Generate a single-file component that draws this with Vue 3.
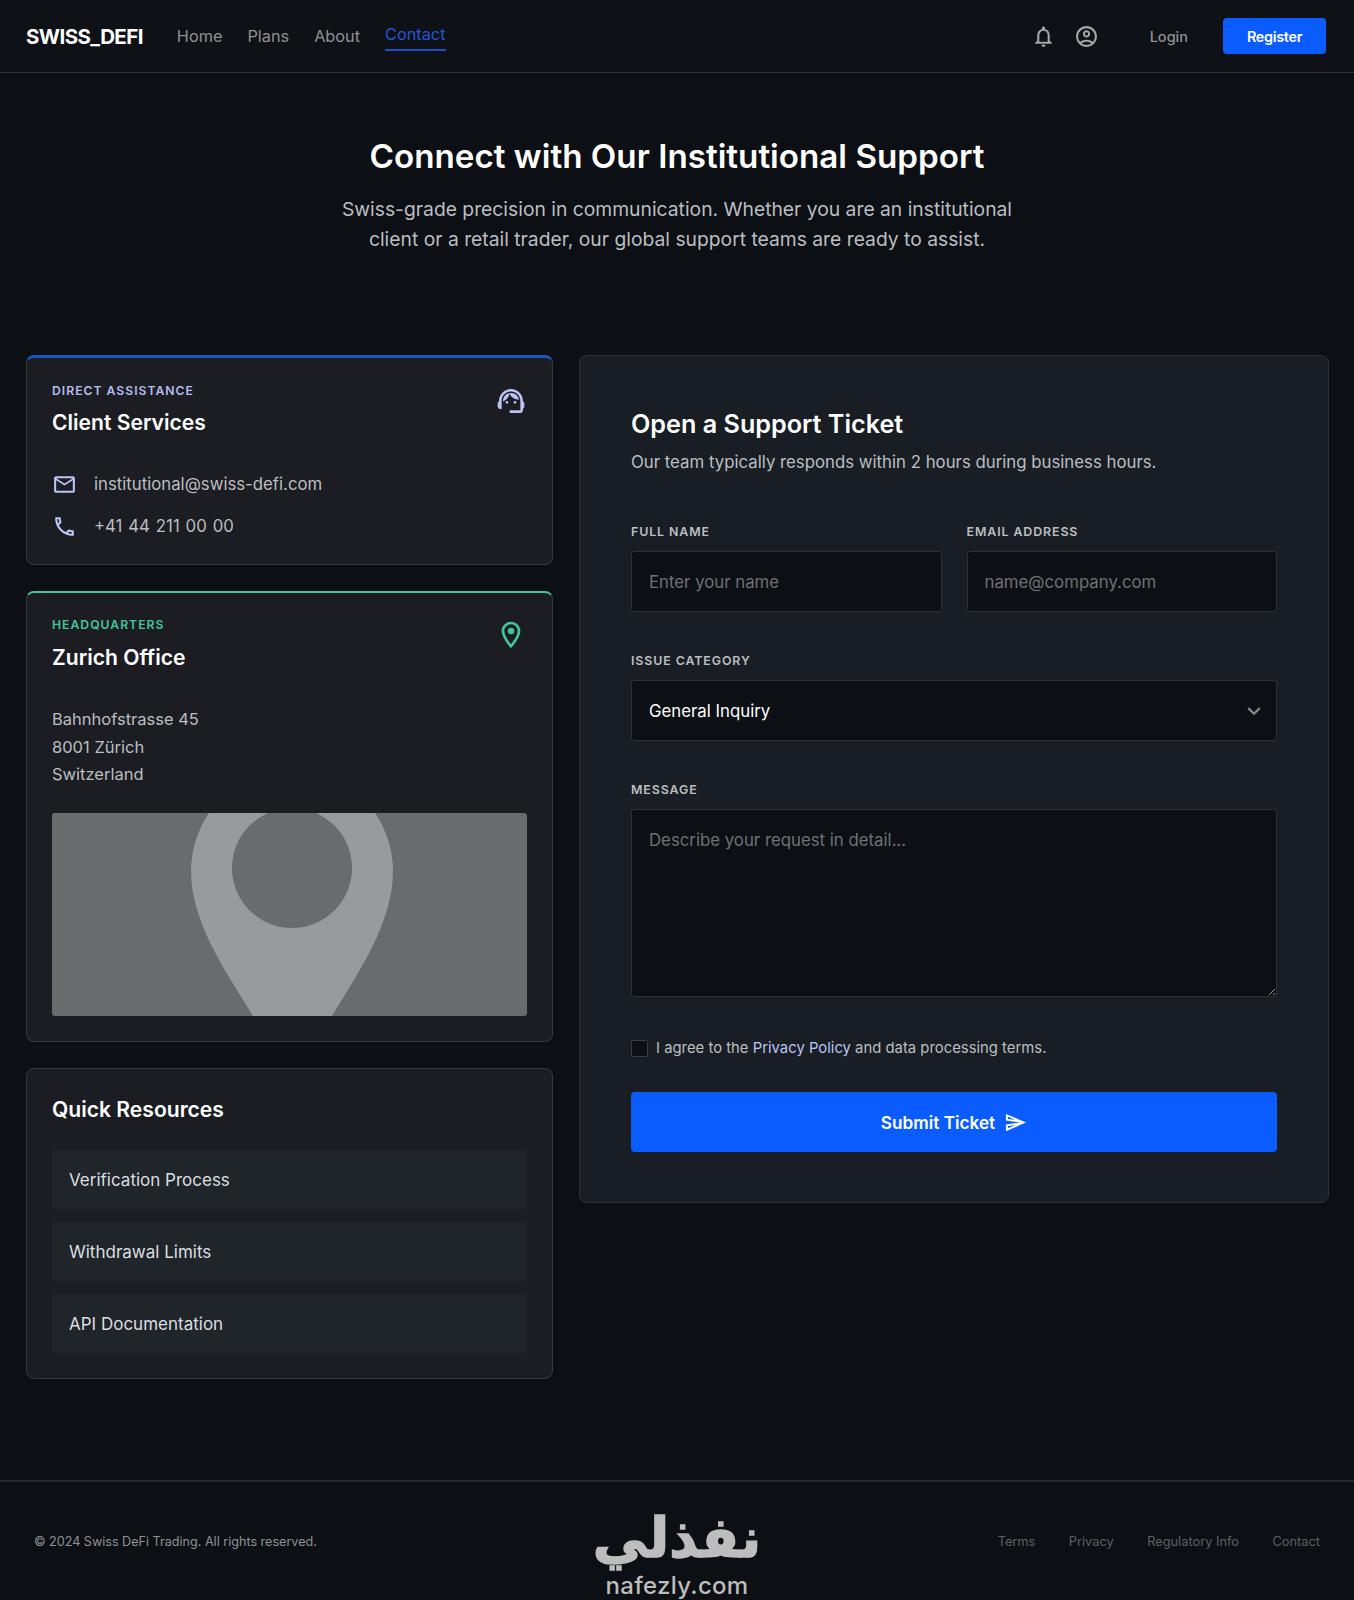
<template>
  <div class="page">
    <header class="topbar">
      <div class="brand">SWISS_DEFI</div>
      <nav class="nav">
        <a v-for="item in navItems" :key="item" class="nav-link" :class="{ active: item === 'Contact' }">{{ item }}</a>
      </nav>
      <div class="top-actions">
        <svg class="top-icon" viewBox="0 0 24 24"><path d="M12 22c1.1 0 2-.9 2-2h-4c0 1.1.9 2 2 2zm6-6v-5c0-3.07-1.63-5.64-4.5-6.32V4c0-.83-.67-1.5-1.5-1.5s-1.5.67-1.5 1.5v.68C7.64 5.36 6 7.92 6 11v5l-2 2v1h16v-1l-2-2zm-2 1H8v-6c0-2.48 1.51-4.5 4-4.5s4 2.02 4 4.5v6z" /></svg>
        <svg class="top-icon" viewBox="0 0 24 24"><path d="M12 2C6.48 2 2 6.48 2 12s4.48 10 10 10 10-4.48 10-10S17.52 2 12 2zM7.35 18.5C8.66 17.56 10.26 17 12 17s3.34.56 4.65 1.5C15.34 19.44 13.74 20 12 20s-3.34-.56-4.65-1.5zm10.79-1.38C16.45 15.8 14.32 15 12 15s-4.45.8-6.14 2.12C4.7 15.73 4 13.95 4 12c0-4.42 3.58-8 8-8s8 3.58 8 8c0 1.95-.7 3.73-1.86 5.12z" /><path d="M12 6c-1.93 0-3.5 1.57-3.5 3.5S10.07 13 12 13s3.5-1.57 3.5-3.5S13.93 6 12 6zm0 5c-.83 0-1.5-.67-1.5-1.5S11.17 8 12 8s1.5.67 1.5 1.5S12.83 11 12 11z" /></svg>
        <a class="login">Login</a>
        <button class="register">Register</button>
      </div>
    </header>

    <section class="hero">
      <h1>Connect with Our Institutional Support</h1>
      <p>Swiss-grade precision in communication. Whether you are an institutional<br>client or a retail trader, our global support teams are ready to assist.</p>
    </section>

    <main class="content">
      <div class="left-col">
        <section class="card card-blue">
          <div class="card-head">
            <div>
              <div class="eyebrow eyebrow-blue">DIRECT ASSISTANCE</div>
              <h3>Client Services</h3>
            </div>
            <svg class="head-icon lilac" viewBox="0 0 24 24"><path d="M21 12.22C21 6.73 16.74 3 12 3c-4.69 0-9 3.65-9 9.28-.6.34-1 .98-1 1.72v2c0 1.1.9 2 2 2h1v-6.1c0-3.87 3.13-7 7-7s7 3.13 7 7V19h-8v2h8c1.1 0 2-.9 2-2v-1.22c.59-.31 1-.92 1-1.64v-2.3c0-.7-.41-1.31-1-1.62z" /><circle cx="9" cy="13" r="1" /><circle cx="15" cy="13" r="1" /><path d="M18 11.03C17.52 8.18 15.04 6 12.05 6c-3.03 0-6.29 2.51-6.03 6.45 2.47-1.01 4.33-3.21 4.86-5.89 1.31 2.63 4 4.44 7.12 4.47z" /></svg>
          </div>
          <div class="contact-rows">
            <div class="contact-row">
              <svg class="row-icon lilac" viewBox="0 0 24 24"><path d="M20 4H4c-1.1 0-1.99.9-1.99 2L2 18c0 1.1.9 2 2 2h16c1.1 0 2-.9 2-2V6c0-1.1-.9-2-2-2zm0 14H4V8l8 5 8-5v10zm-8-7L4 6h16l-8 5z" /></svg>
              <span>institutional@swiss-defi.com</span>
            </div>
            <div class="contact-row">
              <svg class="row-icon lilac" viewBox="0 0 24 24"><path d="M6.54 5c.06.89.21 1.76.45 2.59l-1.2 1.2c-.41-1.2-.67-2.47-.76-3.79h1.51m9.86 12.02c.85.24 1.72.39 2.6.45v1.49c-1.32-.09-2.59-.35-3.8-.75l1.2-1.19M7.5 3H4c-.55 0-1 .45-1 1 0 9.39 7.61 17 17 17 .55 0 1-.45 1-1v-3.49c0-.55-.45-1-1-1-1.24 0-2.45-.2-3.57-.57-.1-.04-.21-.05-.31-.05-.26 0-.51.1-.71.29l-2.2 2.2c-2.83-1.45-5.15-3.76-6.59-6.59l2.2-2.2c.28-.28.36-.67.25-1.02C8.7 6.45 8.5 5.25 8.5 4c0-.55-.45-1-1-1z" /></svg>
              <span class="phone">+41 44 211 00 00</span>
            </div>
          </div>
        </section>

        <section class="card card-green">
          <div class="card-head">
            <div>
              <div class="eyebrow eyebrow-green">HEADQUARTERS</div>
              <h3>Zurich Office</h3>
            </div>
            <svg class="head-icon green" viewBox="0 0 24 24"><path d="M12 2C8.13 2 5 5.13 5 9c0 5.25 7 13 7 13s7-7.75 7-13c0-3.87-3.13-7-7-7zM7 9c0-2.76 2.24-5 5-5s5 2.24 5 5c0 2.88-2.88 7.19-5 9.88C9.92 16.21 7 11.85 7 9z" /><circle cx="12" cy="9" r="2.5" /></svg>
          </div>
          <address class="address">Bahnhofstrasse 45<br>8001 Zürich<br>Switzerland</address>
          <svg class="map" viewBox="0 0 475 203" preserveAspectRatio="none">
            <path d="M157 0C145 18 139 38 139 58C139 110 175 160 201 203L280 203C306 160 341 110 341 58C341 38 335 18 323 0Z" fill="#989a9b" />
            <circle cx="240" cy="55" r="60" fill="#696b6c" />
          </svg>
        </section>

        <section class="card card-plain">
          <h3 class="resources-title">Quick Resources</h3>
          <div class="resources">
            <a v-for="link in resources" :key="link" class="resource">{{ link }}</a>
          </div>
        </section>
      </div>

      <form class="ticket" @submit.prevent>
        <h2>Open a Support Ticket</h2>
        <p class="ticket-sub">Our team typically responds within 2 hours during business hours.</p>
        <div class="field-pair">
          <label class="field">
            <span class="field-label">FULL NAME</span>
            <input class="control" type="text" placeholder="Enter your name">
          </label>
          <label class="field">
            <span class="field-label">EMAIL ADDRESS</span>
            <input class="control" type="text" placeholder="name@company.com">
          </label>
        </div>
        <div class="field">
          <span class="field-label">ISSUE CATEGORY</span>
          <div class="control select">
            <span>General Inquiry</span>
            <svg class="chevron" viewBox="0 0 24 24"><path d="M16.59 8.59L12 13.17 7.41 8.59 6 10l6 6 6-6z" /></svg>
          </div>
        </div>
        <label class="field">
          <span class="field-label">MESSAGE</span>
          <textarea class="control message" placeholder="Describe your request in detail..."></textarea>
        </label>
        <label class="agree">
          <input type="checkbox" class="check">
          <span>I agree to the <a class="policy">Privacy Policy</a> and data processing terms.</span>
        </label>
        <button class="submit" type="submit">
          Submit Ticket
          <svg class="send" viewBox="0 0 24 24"><path d="M4.01 6.03l7.51 3.22-7.52-1 .01-2.22m7.5 8.72L4 17.97v-2.22l7.51-1M2.01 3L2 10l15 2-15 2 .01 7L23 12 2.01 3z" /></svg>
        </button>
      </form>
    </main>

    <footer class="footer">
      <div class="copyright">© 2024 Swiss DeFi Trading. All rights reserved.</div>
      <div class="footer-links">
        <a v-for="link in footerLinks" :key="link">{{ link }}</a>
      </div>
      <div class="watermark">
        <div class="wm-ar">نفذلي</div>
        <div class="wm-en">nafezly.com</div>
      </div>
    </footer>
  </div>
</template>

<script setup>
const navItems = ['Home', 'Plans', 'About', 'Contact']
const resources = ['Verification Process', 'Withdrawal Limits', 'API Documentation']
const footerLinks = ['Terms', 'Privacy', 'Regulatory Info', 'Contact']
</script>

<style>
body {
  background: #0c0f14;
}
</style>

<style scoped>
.page {
  position: relative;
  width: 1354px;
  height: 1600px;
  overflow: hidden;
  background: #0c0f14;
  color: #fff;
  font-family: Inter, "Noto Sans", sans-serif;
}
.topbar {
  display: flex;
  align-items: center;
  height: 72px;
  padding: 0 28px 0 26px;
  border-bottom: 1px solid #303236;
  background: #0e1116;
}
.brand {
  font-size: 20.5px;
  font-weight: 700;
  letter-spacing: -0.6px;
  margin-right: 34px;
}
.nav {
  display: flex;
  gap: 25px;
  align-items: center;
}
.nav-link {
  font-size: 16.3px;
  line-height: 20px;
  color: #8f9296;
}
.nav-link.active {
  color: #2158d6;
  padding-bottom: 5px;
  border-bottom: 2px solid #1a50d0;
  margin-top: 3px;
}
.top-actions {
  display: flex;
  align-items: center;
  margin-left: auto;
}
.top-icon {
  width: 25px;
  height: 25px;
  fill: #a4a6a9;
  margin-right: 18px;
}
.login {
  margin: 0 35px 0 33px;
  font-size: 14.5px;
  font-weight: 500;
  color: #909296;
}
.register {
  width: 103px;
  height: 36px;
  border: 0;
  border-radius: 4px;
  background: #0a5cff;
  color: #fff;
  font-family: inherit;
  font-size: 14.4px;
  font-weight: 600;
  letter-spacing: -0.3px;
}
.hero {
  text-align: center;
  padding-top: 59px;
  height: 282px;
  box-sizing: border-box;
}
.hero h1 {
  margin: 0;
  font-size: 33.2px;
  line-height: 48px;
  font-weight: 600;
}
.hero p {
  margin: 14px 0 0;
  font-size: 19.3px;
  line-height: 30px;
  color: #bcbec1;
}
.content {
  display: grid;
  grid-template-columns: 527px 750px;
  gap: 26px;
  align-items: start;
  padding: 0 26px;
}
.left-col {
  display: flex;
  flex-direction: column;
  gap: 26px;
}
.card {
  box-sizing: border-box;
  border: 1px solid #36393d;
  border-radius: 8px;
  background: #1b1d22;
  padding: 24px 25px 25px;
}
.card-blue {
  border-top: 3px solid #1d55c4;
  padding-top: 25px;
  height: 210px;
}
.card-green {
  border-top: 2px solid #41c69b;
  height: 451px;
}
.card-green h3 {
  margin-top: 9px;
}
.card-plain {
  height: 311px;
}
.card-head {
  display: flex;
  justify-content: space-between;
  align-items: flex-start;
}
.eyebrow {
  font-size: 12.2px;
  line-height: 16px;
  font-weight: 600;
  letter-spacing: 1px;
}
.eyebrow-blue {
  color: #b5bcf0;
}
.eyebrow-green {
  color: #41c69b;
}
h3 {
  margin: 8px 0 0;
  font-size: 21.1px;
  line-height: 32px;
  font-weight: 600;
}
.head-icon {
  width: 32px;
  height: 32px;
  margin-top: 2px;
}
.lilac {
  fill: #bcc3f5;
}
.green {
  fill: #41c69b;
}
.contact-rows {
  display: flex;
  flex-direction: column;
  gap: 14px;
  margin-top: 31px;
}
.contact-row {
  display: flex;
  align-items: center;
  gap: 17px;
  height: 28px;
  font-size: 16.75px;
  color: #bcbec1;
}
.phone {
  word-spacing: 1.2px;
}
.row-icon {
  width: 25px;
  height: 25px;
}
.address {
  margin-top: 32px;
  font-style: normal;
  font-size: 16.5px;
  line-height: 27.5px;
  color: #bcbec1;
}
.map {
  display: block;
  width: 475px;
  height: 203px;
  margin-top: 24px;
  border-radius: 3px;
  background: #696b6c;
}
.resources-title {
  margin: 1px 0 0;
}
.resources {
  display: flex;
  flex-direction: column;
  gap: 13px;
  margin-top: 24px;
}
.resource {
  display: flex;
  align-items: center;
  height: 59px;
  padding: 0 17px;
  border-radius: 3px;
  background: #20252a;
  font-size: 17px;
  color: #dcdee0;
}
.ticket {
  box-sizing: border-box;
  height: 848px;
  padding: 49px 51px 0;
  border: 1px solid #2e3237;
  border-radius: 8px;
  background: #181e24;
}
.ticket h2 {
  margin: 0;
  font-size: 25.2px;
  line-height: 38px;
  font-weight: 600;
}
.ticket-sub {
  margin: 5px 0 0;
  font-size: 16.8px;
  line-height: 28px;
  color: #bcbec1;
}
.field-pair {
  display: grid;
  grid-template-columns: 1fr 1fr;
  gap: 25px;
  margin-top: 48px;
}
.field {
  display: flex;
  flex-direction: column;
}
.field-label {
  font-size: 12.4px;
  line-height: 16px;
  font-weight: 600;
  letter-spacing: 0.9px;
  color: #bcbec1;
  margin-bottom: 11px;
}
.control {
  box-sizing: border-box;
  width: 100%;
  height: 61px;
  padding: 0 17px;
  border: 1px solid #2e3237;
  border-radius: 3px;
  background: #0c0f14;
  color: #fff;
  font-family: inherit;
  font-size: 16.8px;
}
.control::placeholder {
  color: #6e7175;
}
.ticket > .field {
  margin-top: 41px;
}
.select {
  display: flex;
  align-items: center;
  justify-content: space-between;
  padding-right: 9px;
}
.chevron {
  width: 26px;
  height: 26px;
  fill: #8a8d91;
}
.message {
  display: block;
  height: 188px;
  padding-top: 18px;
  line-height: 24px;
}
.agree {
  display: flex;
  align-items: center;
  gap: 8px;
  margin-top: 42px;
  font-size: 14.85px;
  color: #bcbec1;
}
.check {
  appearance: none;
  box-sizing: border-box;
  width: 17px;
  height: 17px;
  margin: 0;
  border: 1px solid #3a3d42;
  border-radius: 2px;
  background: #0c0f14;
}
.policy {
  color: #bcc3f5;
}
.submit {
  display: flex;
  align-items: center;
  justify-content: center;
  gap: 9px;
  width: 100%;
  height: 60px;
  margin-top: 35px;
  border: 0;
  border-radius: 4px;
  background: #0a5cff;
  color: #fff;
  font-family: inherit;
  font-size: 17.2px;
  font-weight: 600;
}
.send {
  width: 23px;
  height: 23px;
  fill: #fff;
}
.footer {
  position: absolute;
  left: 0;
  right: 0;
  bottom: 0;
  display: flex;
  align-items: center;
  justify-content: space-between;
  box-sizing: border-box;
  height: 120px;
  padding: 0 34px;
  border-top: 2px solid #26292d;
  background: #0c0f14;
  font-size: 12.8px;
}
.copyright {
  font-size: 12.6px;
  color: #8f9296;
}
.footer-links {
  display: flex;
  gap: 33.5px;
  color: #5e6166;
}
.watermark {
  position: absolute;
  left: 585px;
  top: 24px;
  width: 184px;
  text-align: center;
  color: #bdbdbd;
}
.wm-ar {
  font-family: "DejaVu Sans", sans-serif;
  font-size: 55px;
  line-height: 65px;
  font-weight: 700;
  -webkit-text-stroke: 1.5px #bdbdbd;
}
.wm-en {
  font-size: 24px;
  line-height: 29px;
  font-weight: 500;
  letter-spacing: 0.3px;
}
</style>
